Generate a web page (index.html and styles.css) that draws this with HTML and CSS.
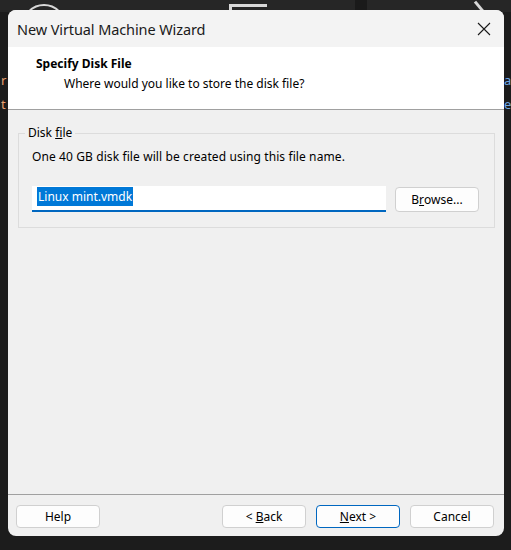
FILE: index.html
```html
<!DOCTYPE html>
<html>
<head>
<meta charset="utf-8">
<link rel="stylesheet" href="styles.css">
</head>
<body>
<div class="desktop">
  <div class="deco deco-circle"></div>
  <div class="deco deco-block1"></div>
  <div class="deco deco-shape"></div>
  <div class="deco deco-block2"></div>
  <div class="deco deco-slash"></div>
  <div class="deco deco-lefttext">r<br>t</div>
  <div class="deco deco-righttext">a<br>e</div>
</div>
<div class="window">
  <div class="titlebar">
    <span class="title">New Virtual Machine Wizard</span>
    <svg class="close" width="14" height="14" viewBox="0 0 14 14"><path d="M1 1 L13 13 M13 1 L1 13" stroke="#1a1a1a" stroke-width="1.1" fill="none"/></svg>
  </div>
  <div class="header">
    <div class="h-title">Specify Disk File</div>
    <div class="h-sub">Where would you like to store the disk file?</div>
  </div>
  <div class="content">
    <div class="group">
      <div class="legend">Disk <u>f</u>ile</div>
      <div class="desc">One 40 GB disk file will be created using this file name.</div>
      <div class="row">
        <div class="input"><span class="sel">Linux mint.vmdk</span></div>
        <div class="btn browse">B<u>r</u>owse...</div>
      </div>
    </div>
  </div>
  <div class="footer">
    <div class="btn">Help</div>
    <div class="spacer"></div>
    <div class="btn"><span>&lt;&nbsp;<u>B</u>ack</span></div>
    <div class="btn primary"><span><u>N</u>ext&nbsp;&gt;</span></div>
    <div class="btn">Cancel</div>
  </div>
</div>
</body>
</html>
```
FILE: styles.css
```css
html, body {
  margin: 0;
  padding: 0;
}
body {
  width: 511px;
  height: 550px;
  background: #1c1c1c;
  overflow: hidden;
  position: relative;
  font-family: "Noto Sans", "Open Sans", sans-serif;
}
.desktop {
  position: absolute;
  inset: 0;
}
.deco { position: absolute; }
.deco-circle {
  left: 22px; top: 4px; width: 44px; height: 44px;
  border: 2px solid #d8d8d8; border-radius: 50%;
  box-sizing: border-box;
}
.deco-block1 { left: 0; top: 0; width: 511px; height: 12px; background: #262626; z-index: -1; }
.deco-shape {
  left: 229px; top: 4px; width: 38px; height: 10px;
  border-top: 3px solid #d8d8d8; border-left: 3px solid #d8d8d8;
  box-sizing: border-box;
}
.deco-block2 { left: 355px; top: 0; width: 12px; height: 12px; background: #1a1a1a; }
.deco-slash {
  left: 478px; top: 0; width: 3px; height: 14px; background: #d8d8d8;
  transform: rotate(-40deg);
}
.deco-lefttext {
  left: 1px; top: 68px; color: #e8a070; font-size: 13px; line-height: 24px;
}
.deco-righttext {
  left: 504px; top: 68px; color: #6fa8e6; font-size: 13px; line-height: 24px;
}
.window {
  position: relative;
  margin: 10px 0 0 8px;
  width: 496px;
  height: 526px;
  background: #f0f0f0;
  border-radius: 8px;
  overflow: hidden;
  display: flex;
  flex-direction: column;
}
.titlebar {
  height: 37px;
  background: #f3f3f3;
  display: flex;
  align-items: center;
  justify-content: space-between;
  padding: 0 13px 0 9px;
  flex: none;
}
.title {
  font-size: 14.5px;
  color: #1a1a1a;
  letter-spacing: -0.1px;
  margin-top: 0px;
}
.header {
  height: 63px;
  background: #ffffff;
  border-bottom: 1px solid #a0a0a0;
  flex: none;
  box-sizing: border-box;
  padding-top: 9px;
}
.h-title {
  font-weight: bold;
  font-size: 12px;
  color: #000;
  padding-left: 28px;
  line-height: 16px;
}
.h-sub {
  font-size: 12px;
  color: #000;
  padding-left: 56px;
  line-height: 16px;
  margin-top: 4px;
}
.content {
  flex: 1;
  padding: 23px 9px 0 10px;
}
.group {
  position: relative;
  border: 1px solid #dcdcdc;
  height: 95px;
  box-sizing: border-box;
  padding: 15px 13px 0 13px;
}
.legend {
  position: absolute;
  left: 6px;
  top: -9px;
  background: #f0f0f0;
  padding: 0 3px;
  font-size: 12px;
  line-height: 16px;
  color: #000;
}
.desc {
  font-size: 12px;
  line-height: 16px;
  color: #000;
  letter-spacing: 0.1px;
}
.row {
  display: flex;
  align-items: center;
  margin-top: 21px;
  gap: 9px;
}
.input {
  width: 354px;
  height: 26px;
  box-sizing: border-box;
  background: #fff;
  border-bottom: 2px solid #0067c0;
  padding: 3px 0 0 5px;
  font-size: 12px;
  line-height: 16px;
}
.sel {
  background: #0078d7;
  color: #fff;
  padding: 1px 1px;
}
.btn {
  width: 84px;
  height: 23px;
  box-sizing: border-box;
  border: 1px solid #d0d0d0;
  border-radius: 4px;
  background: #fdfdfd;
  font-size: 12px;
  color: #000;
  display: flex;
  align-items: center;
  justify-content: center;
  flex: none;
}
.browse { height: 25px; }
.footer {
  flex: none;
  height: 42px;
  border-top: 1px solid #a0a0a0;
  box-sizing: border-box;
  display: flex;
  align-items: flex-start;
  padding: 10px 10px 0 8px;
  gap: 10px;
}
.spacer { flex: 1; }
.primary { border-color: #0067c0; }
```
